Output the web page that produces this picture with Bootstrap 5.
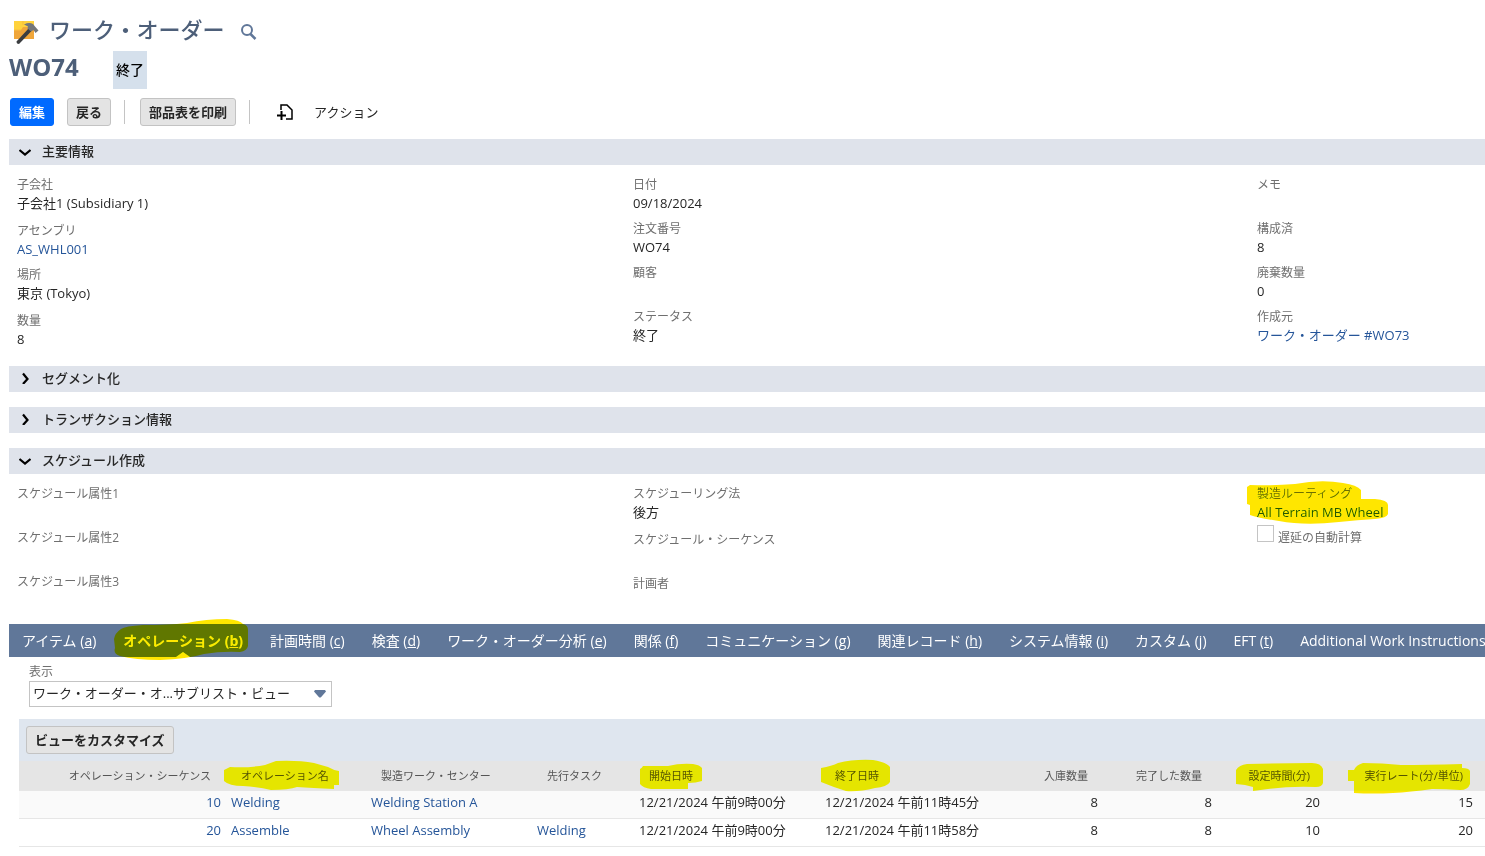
<!DOCTYPE html>
<html lang="ja">
<head>
<meta charset="utf-8">
<meta name="viewport" content="width=device-width, initial-scale=1">
<title>ワーク・オーダー WO74</title>
<link rel="stylesheet" href="https://cdn.jsdelivr.net/npm/bootstrap@5.3.0/dist/css/bootstrap.min.css">
<style>
body{font-family:"Open Sans","Noto Sans CJK JP",sans-serif;font-size:13px;line-height:18px;color:#262626;background:#fff;overflow-x:hidden}
a{color:#255599;text-decoration:none}
.page-body{padding:14px 0 8px 9px}
.page-title{font-size:22px;line-height:30px;font-weight:500;color:#4d5f79}
.record-row{margin:7px 0 9px}
.record-id{font-size:24px;line-height:32px;font-weight:700;color:#4d5f79;min-width:104px}
.status-box{background:#d5e0ec;color:#000;font-size:14px;font-weight:500;line-height:38px;padding:0 3px}
.tool-row{gap:13px;padding-left:1px;margin-bottom:13px}
.tool-btn{--bs-btn-font-size:13px;--bs-btn-font-weight:700;--bs-btn-line-height:18px;--bs-btn-padding-x:8px;--bs-btn-padding-y:4px;--bs-btn-border-radius:3px;--bs-btn-bg:#e4e4e4;--bs-btn-border-color:#c3c3c3;--bs-btn-color:#262626}
.tool-main{--bs-btn-bg:#006aff;--bs-btn-border-color:#006aff;--bs-btn-color:#fff}
.sep-line{width:1px;height:24px;background:#c4c4c4;margin-right:2px}
.new-btn{margin-left:12px}
.section-bar{display:flex;align-items:center;width:100%;height:26px;border:0;padding:0 10px 2px;margin-bottom:15px;background:#dfe3eb;color:#262626;font-weight:500;text-align:left}
.section-bar.open{margin-bottom:0}
.section-bar svg{width:12px;height:12px;margin-right:11px}
.field-grid{display:grid;grid-template-columns:616fr 624fr 236fr;padding:11px 0 10px}
.field-grid.last-grid{padding-bottom:7px}
.field-grid>div{padding-left:8px}
.field-item{min-height:44px;position:relative}
.field-item.tall{min-height:46px}
.field-item.snug{min-height:40px}
.field-name{display:block;font-size:12px;line-height:18px;color:#6f6f6f}
.field-value{line-height:18px}
.marked{position:relative;display:inline-block}
.ink{position:absolute;mix-blend-mode:darken;pointer-events:none;overflow:visible;fill:#ffe600;width:1px;height:1px;left:0;top:0}
.tick{width:17px;height:17px;margin:0;border:1px solid #c4c4c4;border-radius:0;appearance:none;background:#fff}
.tick:checked{background:#607799}
.tab-bar{background:#607799;height:33px;white-space:nowrap;gap:1px}
.tab-bar .nav-link{color:#fff;font-size:14px;line-height:33px;padding:0 13px;position:relative}
.tab-bar .nav-link.active{font-weight:700}
.tab-bar .nav-link.active::before{content:"";position:absolute;left:50%;bottom:0;margin-left:-7px;border:7px solid transparent;border-top:0;border-bottom:5px solid #fff}
.list-filter{padding:6px 0 12px 20px}
.view-select{width:303px;height:26px;font-size:13px;line-height:18px;padding:0 30px 2px 3px;border:1px solid #c4c4c4;border-radius:0;color:#262626;background-image:url("data:image/svg+xml,%3Csvg xmlns='http://www.w3.org/2000/svg' viewBox='0 0 12 8'%3E%3Cpath d='M1 0h10l1 1.500L7.200 7Q6 8 4.800 7L0 1.500z' fill='%23607799'/%3E%3C/svg%3E");background-size:12px 8px;background-position:right 5px center}
.list-block{margin-left:10px}
.list-tools{background:#dfe6ef;height:42px;padding:7px}
.ops{table-layout:fixed;min-width:1466px;margin:0}
.ops th,.ops td{border-bottom:1px solid #e6e6e6;white-space:nowrap;vertical-align:middle}
.ops th{background:#e5e5e5;font-size:11px;font-weight:400;color:#555;line-height:18px;padding:6px 15px 4px;height:29px}
.ops td{height:28px;line-height:18px;padding:2px 5px 7px;color:#262626}
.ops tbody tr:first-child td{background:#fafafa}
.w-name{width:140px}.w-center{width:166px}.w-prev{width:102px}.w-start{width:186px}.w-end{width:209px}.w-in{width:74px}.w-done{width:114px}.w-setup{width:108px}.w-rate{width:153px}.w-rest{width:7px}
</style>
</head>
<body>
<main class="page-body">
  <header>
    <div class="d-flex align-items-center">
      <svg class="ms-1" width="28" height="30" viewBox="0 0 28 30" aria-hidden="true"><path d="M1 7h20v18H1z" fill="#f0a63a"/><path d="M1 7h20v6H10l-2 3H1z" fill="#ffd23c"/><path d="M10 7v4M1 16h7" stroke="#f7bd3f"/><path d="M3.500 27.500L16 14l3 2.500L6 30q-2.500 0-2.500-2.500z" fill="#3b3d40"/><path d="M11 10.500q5-2.500 9-.5l2 2.500 3.500 4-3 2.500-2-3-2.500 1.500-3.500-3 .5-2z" fill="#74777b"/></svg>
      <h1 class="page-title mb-0 ms-2">ワーク・オーダー</h1>
      <button class="btn p-0 border-0 ms-3 mt-1 d-flex" aria-label="検索"><svg width="17" height="17" viewBox="0 0 17 17" fill="none" stroke="#607799"><circle cx="6" cy="7" r="5" stroke-width="2"/><path d="M9.500 11l5 5" stroke-width="2.500"/></svg></button>
    </div>
    <div class="d-flex align-items-start record-row">
      <div class="record-id">WO74</div>
      <div class="status-box">終了</div>
    </div>
  </header>

  <div class="d-flex align-items-center tool-row">
    <button class="btn tool-btn tool-main">編集</button>
    <button class="btn tool-btn">戻る</button>
    <span class="sep-line"></span>
    <button class="btn tool-btn">部品表を印刷</button>
    <span class="sep-line"></span>
    <button class="btn p-0 border-0 d-flex new-btn" aria-label="新規"><svg width="16" height="18" viewBox="0 0 16 18" fill="none" stroke="#000"><path d="M4 7V2h6l5 5v9H9" stroke-width="1.500"/><path d="M0 12.500h9M4.500 8v9" stroke-width="2"/></svg></button>
    <a href="#" class="text-reset ms-2">アクション</a>
  </div>

  <button class="section-bar open" aria-expanded="true"><svg viewBox="0 0 12 12" fill="none" stroke="#000" stroke-width="2.200"><path d="M.5 5L6 9.500 11.500 5"/></svg>主要情報</button>
  <section class="field-grid">
    <div>
      <div class="field-item tall"><span class="field-name">子会社</span><div class="field-value">子会社1 (Subsidiary 1)</div></div>
      <div class="field-item"><span class="field-name">アセンブリ</span><div class="field-value"><a href="#">AS_WHL001</a></div></div>
      <div class="field-item tall"><span class="field-name">場所</span><div class="field-value">東京 (Tokyo)</div></div>
      <div class="field-item"><span class="field-name">数量</span><div class="field-value">8</div></div>
    </div>
    <div>
      <div class="field-item"><span class="field-name">日付</span><div class="field-value">09/18/2024</div></div>
      <div class="field-item"><span class="field-name">注文番号</span><div class="field-value">WO74</div></div>
      <div class="field-item"><span class="field-name">顧客</span></div>
      <div class="field-item"><span class="field-name">ステータス</span><div class="field-value">終了</div></div>
    </div>
    <div>
      <div class="field-item"><span class="field-name">メモ</span></div>
      <div class="field-item"><span class="field-name">構成済</span><div class="field-value">8</div></div>
      <div class="field-item"><span class="field-name">廃棄数量</span><div class="field-value">0</div></div>
      <div class="field-item"><span class="field-name">作成元</span><div class="field-value"><a href="#">ワーク・オーダー #WO73</a></div></div>
    </div>
  </section>

  <button class="section-bar" aria-expanded="false"><svg viewBox="0 0 12 12" fill="none" stroke="#000" stroke-width="2.200"><path d="M4 1.500L8.500 7 4 12"/></svg>セグメント化</button>
  <button class="section-bar" aria-expanded="false"><svg viewBox="0 0 12 12" fill="none" stroke="#000" stroke-width="2.200"><path d="M4 1.500L8.500 7 4 12"/></svg>トランザクション情報</button>
  <button class="section-bar open" aria-expanded="true"><svg viewBox="0 0 12 12" fill="none" stroke="#000" stroke-width="2.200"><path d="M.5 5L6 9.500 11.500 5"/></svg>スケジュール作成</button>
  <section class="field-grid last-grid">
    <div>
      <div class="field-item"><span class="field-name">スケジュール属性1</span></div>
      <div class="field-item"><span class="field-name">スケジュール属性2</span></div>
      <div class="field-item"><span class="field-name">スケジュール属性3</span></div>
    </div>
    <div>
      <div class="field-item tall"><span class="field-name">スケジューリング法</span><div class="field-value">後方</div></div>
      <div class="field-item"><span class="field-name">スケジュール・シーケンス</span></div>
      <div><span class="field-name">計画者</span></div>
    </div>
    <div>
      <div class="field-item snug"><span class="field-name">製造ルーティング</span><div class="field-value"><a href="#">All Terrain MB Wheel</a></div>
        <svg class="ink" aria-hidden="true"><path d="M-10 5V2l3-2q22 1 45-1 26-5 48-1 14 2 18 7v9h14q13 1 13 6v9q-1 4-13 5-17 1-36 3-34 4-60-1-21-3-29-6V20l-3-1z"/></svg></div>
      <div class="d-flex align-items-start"><input class="tick" type="checkbox" id="autoDelay"><label class="field-name ms-1 mt-1" for="autoDelay">遅延の自動計算</label></div>
    </div>
  </section>

  <nav>
    <ul class="nav flex-nowrap tab-bar">
      <li class="nav-item"><a class="nav-link" href="#">アイテム (<u>a</u>)</a></li>
      <li class="nav-item"><a class="nav-link active" href="#" aria-current="page">オペレーション (<u>b</u>)<svg class="ink" aria-hidden="true"><path d="M4 15q1-6 7-10 4-3 22-4 24 0 44-2 19-4 40-4 13 1 16 5 5 1 5 6v16q-1 5-8 6-18-1-36 2-17 5-44 6-25 0-40-4-7-2-5-8z"/></svg></a></li>
      <li class="nav-item"><a class="nav-link" href="#">計画時間 (<u>c</u>)</a></li>
      <li class="nav-item"><a class="nav-link" href="#">検査 (<u>d</u>)</a></li>
      <li class="nav-item"><a class="nav-link" href="#">ワーク・オーダー分析 (<u>e</u>)</a></li>
      <li class="nav-item"><a class="nav-link" href="#">関係 (<u>f</u>)</a></li>
      <li class="nav-item"><a class="nav-link" href="#">コミュニケーション (<u>g</u>)</a></li>
      <li class="nav-item"><a class="nav-link" href="#">関連レコード (<u>h</u>)</a></li>
      <li class="nav-item"><a class="nav-link" href="#">システム情報 (<u>i</u>)</a></li>
      <li class="nav-item"><a class="nav-link" href="#">カスタム (<u>j</u>)</a></li>
      <li class="nav-item"><a class="nav-link" href="#">EFT (<u>t</u>)</a></li>
      <li class="nav-item"><a class="nav-link" href="#">Additional Work Instructions</a></li>
    </ul>
  </nav>

  <div class="list-filter">
    <label class="field-name" for="listView">表示</label>
    <select class="form-select view-select" id="listView"><option>ワーク・オーダー・オ...サブリスト・ビュー</option></select>
  </div>

  <div class="list-block">
    <div class="list-tools"><button class="btn tool-btn">ビューをカスタマイズ</button></div>
    <table class="table ops">
      <thead>
        <tr>
          <th class="text-end">オペレーション・シーケンス</th>
          <th class="w-name"><span class="marked">オペレーション名<svg class="ink" aria-hidden="true"><path d="M-17 3l6-3q20 1 35-2l11-4q22-1 38 2l14 4q5 3 11 4v14h-5v4q-22-1-37-2-8 3-26 3-12-3-28-4-14 0-19-5z"/></svg></span></th>
          <th class="w-center">製造ワーク・センター</th>
          <th class="w-prev">先行タスク</th>
          <th class="w-start"><span class="marked">開始日時<svg class="ink" aria-hidden="true"><path d="M-9 2q2-1 3-3h25q12-3 25-2 7 1 9 4v13q-6 2-14 2v6H2q-8-1-11-5z"/></svg></span></th>
          <th class="w-end"><span class="marked">終了日時<svg class="ink" aria-hidden="true"><path d="M-14 1q11-2 17-5 16-4 35-3 13 2 17 7v15q-3 5-15 6-16 4-29 3Q-2 20-14 15z"/></svg></span></th>
          <th class="w-in text-end">入庫数量</th>
          <th class="w-done text-end">完了した数量</th>
          <th class="w-setup text-end"><span class="marked">設定時間(分)<svg class="ink" aria-hidden="true"><path d="M-13 3Q-10-2-2-3q35-1 65-1 9 0 11 6v14q-1 4-7 4-26-1-48 2L4 24v-4l-8-2-9-1z"/></svg></span></th>
          <th class="w-rate text-end"><span class="marked">実行レート(分/単位)<svg class="ink" aria-hidden="true"><path d="M-16 3h6q2-5 9-7 19 0 38 2 24 0 61-1v4q7 0 8 3v13q-2 6-10 6-14-1-28-1-22 3-39 4-20 1-39 0V14h-6z"/></svg></span></th>
          <th class="w-rest p-0"></th>
        </tr>
      </thead>
      <tbody>
        <tr><td class="text-end"><a href="#">10</a></td><td><a href="#">Welding</a></td><td><a href="#">Welding Station A</a></td><td></td><td>12/21/2024 午前9時00分</td><td>12/21/2024 午前11時45分</td><td class="text-end">8</td><td class="text-end">8</td><td class="text-end">20</td><td class="text-end">15</td><td></td></tr>
        <tr><td class="text-end"><a href="#">20</a></td><td><a href="#">Assemble</a></td><td><a href="#">Wheel Assembly</a></td><td><a href="#">Welding</a></td><td>12/21/2024 午前9時00分</td><td>12/21/2024 午前11時58分</td><td class="text-end">8</td><td class="text-end">8</td><td class="text-end">10</td><td class="text-end">20</td><td></td></tr>
      </tbody>
    </table>
  </div>
</main>
<script src="https://cdn.jsdelivr.net/npm/bootstrap@5.3.0/dist/js/bootstrap.bundle.min.js"></script>
</body>
</html>
